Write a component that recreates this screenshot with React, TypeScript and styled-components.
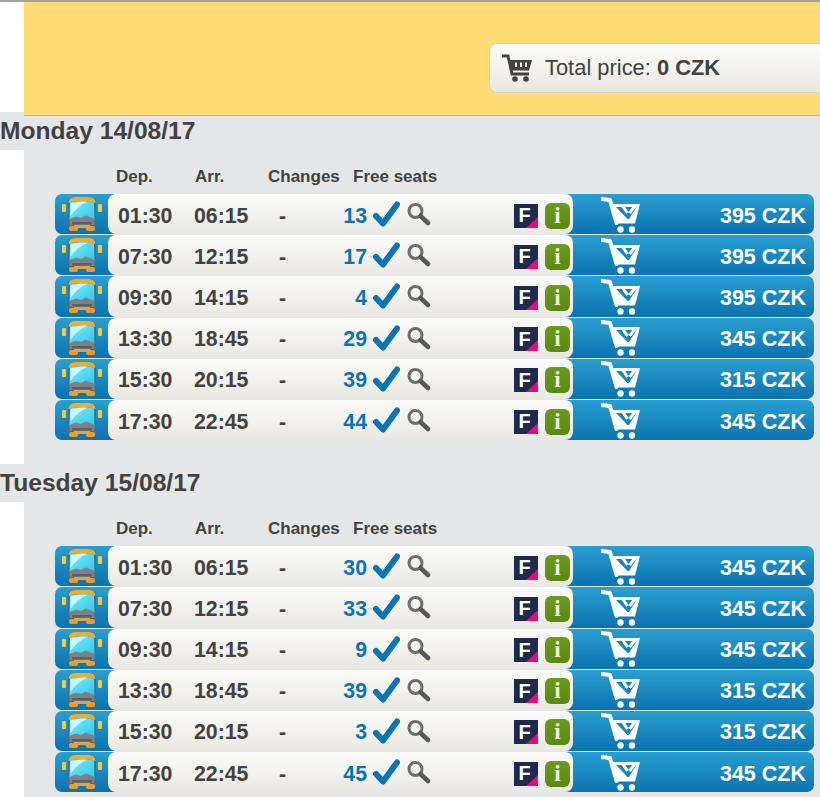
import React from "react";
import styled, { createGlobalStyle } from "styled-components";

interface Connection {
    dep: string;
    arr: string;
    seats: number;
    price: number;
}

interface Day {
    title: string;
    connections: Connection[];
}

const DAYS: Day[] = [
    {
        title: "Monday 14/08/17",
        connections: [
            { dep: "01:30", arr: "06:15", seats: 13, price: 395 },
            { dep: "07:30", arr: "12:15", seats: 17, price: 395 },
            { dep: "09:30", arr: "14:15", seats: 4, price: 395 },
            { dep: "13:30", arr: "18:45", seats: 29, price: 345 },
            { dep: "15:30", arr: "20:15", seats: 39, price: 315 },
            { dep: "17:30", arr: "22:45", seats: 44, price: 345 },
        ],
    },
    {
        title: "Tuesday 15/08/17",
        connections: [
            { dep: "01:30", arr: "06:15", seats: 30, price: 345 },
            { dep: "07:30", arr: "12:15", seats: 33, price: 345 },
            { dep: "09:30", arr: "14:15", seats: 9, price: 345 },
            { dep: "13:30", arr: "18:45", seats: 39, price: 315 },
            { dep: "15:30", arr: "20:15", seats: 3, price: 315 },
            { dep: "17:30", arr: "22:45", seats: 45, price: 345 },
        ],
    },
];

const GlobalStyle = createGlobalStyle`
  html, body {
    margin: 0;
    padding: 0;
    background: #fff;
    overflow: hidden;
  }
  body {
    font-family: "Liberation Sans", Arial, sans-serif;
    color: #444240;
  }
`;

const Page = styled.div`
  width: 820px;
  height: 797px;
  overflow: hidden;
  border-top: 2px solid #a3a3a3;
  box-sizing: border-box;
`;

const Header = styled.header`
  height: 110px;
  padding-left: 24px;
  display: flex;
`;

const Banner = styled.div`
  position: relative;
  flex: 1;
  height: 114px;
  box-sizing: border-box;
  background: #ffdb74;
  border-bottom: 1px solid #b5b2a6;
  padding: 41px 0 0 465px;
`;

const TotalBox = styled.div`
  height: 50px;
  box-sizing: border-box;
  display: flex;
  align-items: center;
  gap: 12px;
  padding-left: 11px;
  border: 1px solid #d6d3c5;
  border-right: none;
  border-radius: 8px 0 0 8px;
  background: linear-gradient(#fbfbf9, #e9e8e3);
  font-size: 21.9px;
`;

const Heading = styled.h2`
  margin: 0;
  width: 100%;
  height: 38px;
  background: #e5e6e8;
  font-size: 24.6px;
  font-weight: bold;
  line-height: 38px;
`;

const DayBody = styled.section`
  margin-left: 24px;
  background: #e5e6e8;
  padding: 12px 6px 24px 31px;
`;

const Columns = styled.div`
  height: 29px;
  margin-bottom: 3px;
  display: flex;
  align-items: center;
  padding-left: 61px;
  font-size: 17px;
  font-weight: bold;
`;

const ColumnLabel = styled.span<{ $width: number }>`
  width: ${(p) => p.$width}px;
  white-space: nowrap;
`;

const Rows = styled.div`
  display: flex;
  flex-direction: column;
  gap: 1px;
`;

const Row = styled.div`
  height: 40.2px;
  display: flex;
  border-radius: 7px;
  background: linear-gradient(#2a9fcf, #0a72b0);
`;

const BusCell = styled.div`
  width: 53px;
  display: flex;
  align-items: center;
  justify-content: center;
`;

const Middle = styled.div`
  width: 465px;
  display: flex;
  align-items: center;
  padding: 1px 0 0 10px;
  box-sizing: border-box;
  border-radius: 8px;
  background: linear-gradient(#fbfbf9, #e9e8e3);
  font-size: 21.3px;
  font-weight: bold;
`;

const Time = styled.span`
  width: 76px;
  padding-top: 3px;
`;

const Dash = styled.span`
  width: 62px;
  padding: 3px 0 0 9px;
  box-sizing: border-box;
`;

const Seats = styled.span`
  width: 35px;
  padding-top: 3px;
  text-align: right;
  color: #0b74b4;
  margin-right: 6px;
`;

const IconSlot = styled.span<{ $width: number }>`
  width: ${(p) => p.$width}px;
  height: 30px;
  display: flex;
  align-items: center;
`;

const Badges = styled.div`
  margin-left: auto;
  margin-right: 3px;
  display: flex;
  align-items: center;
  gap: 7px;
  padding-top: 2px;
`;

const FBadge = styled.span`
  position: relative;
  width: 24px;
  height: 24px;
  padding-right: 3px;
  box-sizing: border-box;
  display: flex;
  align-items: center;
  justify-content: center;
  overflow: hidden;
  background: #1e2a4f;
  color: #fff;
  font-size: 20px;
  font-weight: bold;
  &::after {
    content: "";
    position: absolute;
    right: 0;
    bottom: 0;
    border-style: solid;
    border-width: 0 0 11px 12px;
    border-color: transparent transparent #ea0a78 transparent;
  }
`;

const InfoBadge = styled.span`
  width: 25px;
  height: 26px;
  display: flex;
  align-items: center;
  justify-content: center;
  border-radius: 6px;
  background: linear-gradient(#6b9a1e, #5a8a10);
  color: #f4f4e6;
  font-family: "Liberation Serif", serif;
  font-size: 23px;
  font-weight: bold;
`;

const BuyCell = styled.div`
  flex: 1;
  display: flex;
  align-items: center;
  justify-content: space-between;
  padding: 1px 8px 0 28px;
  color: #fff;
  font-size: 21.5px;
  font-weight: bold;
`;

const Price = styled.span`
  padding-top: 3px;
`;

const BusIcon = () => (
    <svg width="44" height="36" viewBox="0 0 44 36">
        <defs>
            <linearGradient id="glass" x1="0" y1="0" x2="1" y2="1">
                <stop offset="0" stopColor="#7fecfb" />
                <stop offset="1" stopColor="#2fc6ea" />
            </linearGradient>
        </defs>
        <rect x="2" y="8" width="4" height="8" rx="1" fill="#f6c846" />
        <rect x="38" y="8" width="4" height="8" rx="1" fill="#f6c846" />
        <path d="M8 9 Q8 1 15 1 H29 Q36 1 36 9 V31 H8 Z" fill="#3d6f86" />
        <path d="M8.500 7 Q9 1 15 1 H29 Q35 1 35.500 7 Q22 3 8.500 7 Z" fill="#f0ad2c" />
        <path d="M10 6.500 Q22 3.500 34 6.500 L34.500 24 H9.500 Z" fill="url(#glass)" />
        <path d="M10.500 7.500 Q18 5.500 28 5.500 Q17 10 10.500 20 Z" fill="#c9f8fe" />
        <path d="M9.500 23 L16 20.500 L21 22 L26 19.500 L34.500 23 V29 H9.500 Z" fill="#7d8086" />
        <rect x="12" y="26" width="20" height="2.500" rx="1" fill="#5b5e64" />
        <rect x="9" y="30" width="9" height="5" rx="2" fill="#f39a1c" />
        <rect x="26" y="30" width="9" height="5" rx="2" fill="#f39a1c" />
        <rect x="14" y="29" width="16" height="3" fill="#d9a650" />
    </svg>
);

const CheckIcon = () => (
    <svg width="27" height="27" viewBox="0 0 27 27">
        <path d="M3 15 L10 22.500 L24 3.500" fill="none" stroke="#0b74b4" strokeWidth="6" strokeLinecap="round" strokeLinejoin="round" />
    </svg>
);

const SearchIcon = () => (
    <svg width="25" height="25" viewBox="0 0 25 25">
        <circle cx="9.500" cy="9" r="6.500" fill="none" stroke="#6d6d70" strokeWidth="3" />
        <path d="M14.500 14 L22 21" fill="none" stroke="#58585c" strokeWidth="4.500" strokeLinecap="round" />
    </svg>
);

const BuyIcon = () => (
    <svg width="40" height="36" viewBox="0 0 40 36">
        <path d="M1 2 L9 3 L15.500 26" fill="none" stroke="#fff" strokeWidth="4" strokeLinejoin="round" strokeLinecap="round" />
        <path d="M10.500 7 H39 L34 26.500 H15.500 Z" fill="#fff" />
        <path d="M15 10 H35.500 L28 22 H26.500 Z" fill="#1b86bd" />
        <path d="M21 8 L26.500 16 M35 8 L28.500 16" fill="none" stroke="#fff" strokeWidth="3" />
        <circle cx="19.500" cy="32.500" r="3.200" fill="#fff" />
        <circle cx="31" cy="32.500" r="3.200" fill="#fff" />
    </svg>
);

const TotalCartIcon = () => (
    <svg width="32" height="28" viewBox="0 0 32 28">
        <path d="M1 2 H7 L11 20 H28" fill="none" stroke="#444240" strokeWidth="2.800" />
        <path d="M7 6 H31 L28 16.500 H10 Z" fill="#444240" />
        <path d="M14 8.500 H16 V13 H14 Z M19 8.500 H21 V13 H19 Z M24 8.500 H26 V13 H24 Z" fill="#f3f2ef" />
        <circle cx="14" cy="25" r="2.800" fill="#444240" />
        <circle cx="25" cy="25" r="2.800" fill="#444240" />
    </svg>
);

function ConnectionRow({ connection }: { connection: Connection }) {
    return (
        <Row>
            <BusCell>
                <BusIcon />
            </BusCell>
            <Middle>
                <Time>{connection.dep}</Time>
                <Time>{connection.arr}</Time>
                <Dash>-</Dash>
                <Seats>{connection.seats}</Seats>
                <IconSlot $width={33}>
                    <CheckIcon />
                </IconSlot>
                <IconSlot $width={25}>
                    <SearchIcon />
                </IconSlot>
                <Badges>
                    <FBadge>F</FBadge>
                    <InfoBadge>i</InfoBadge>
                </Badges>
            </Middle>
            <BuyCell>
                <BuyIcon />
                <Price>{connection.price} CZK</Price>
            </BuyCell>
        </Row>
    );
}

export default function App() {
    return (
        <Page>
            <GlobalStyle />
            <Header>
                <Banner>
                    <TotalBox>
                        <TotalCartIcon />
                        <span>
                            Total price: <b>0 CZK</b>
                        </span>
                    </TotalBox>
                </Banner>
            </Header>
            {DAYS.map((day) => (
                <div key={day.title}>
                    <Heading>{day.title}</Heading>
                    <DayBody>
                        <Columns>
                            <ColumnLabel $width={79}>Dep.</ColumnLabel>
                            <ColumnLabel $width={73}>Arr.</ColumnLabel>
                            <ColumnLabel $width={85}>Changes</ColumnLabel>
                            <ColumnLabel $width={90}>Free seats</ColumnLabel>
                        </Columns>
                        <Rows>
                            {day.connections.map((connection) => (
                                <ConnectionRow key={connection.dep} connection={connection} />
                            ))}
                        </Rows>
                    </DayBody>
                </div>
            ))}
        </Page>
    );
}
